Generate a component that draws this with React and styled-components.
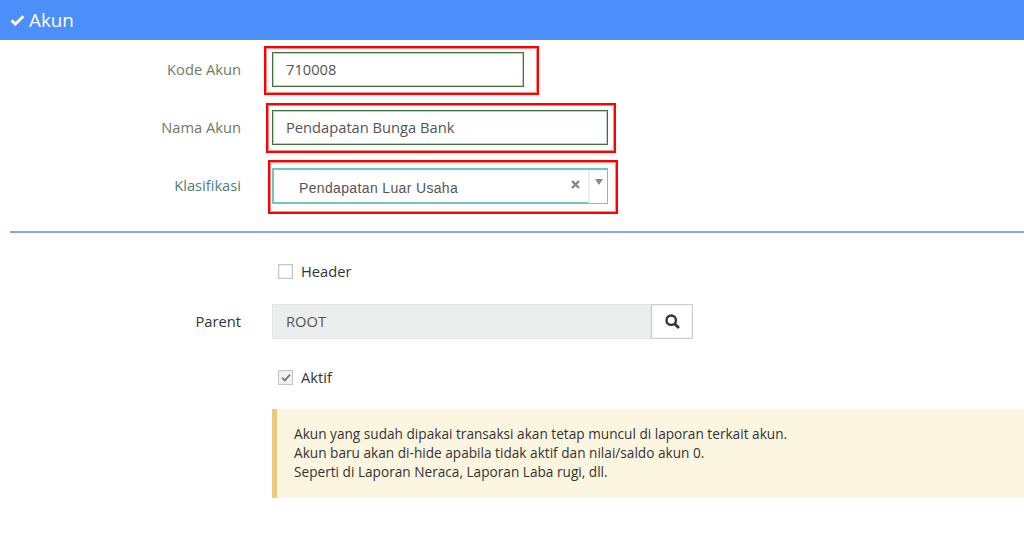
import React from "react";
import styled, { createGlobalStyle } from "styled-components";

const Global = createGlobalStyle`
  html, body { margin: 0; padding: 0; background: #fff; }
  body { font-family: "Open Sans", "Liberation Sans", sans-serif; font-size: 14.7px; color: #333; }
`;

const Page = styled.div`
  width: 1024px;
  height: 548px;
  overflow: hidden;
`;

const TitleBar = styled.div`
  height: 40px;
  background: #4c8ffb;
  color: #fff;
  display: flex;
  align-items: center;
  gap: 4px;
  padding-left: 10px;
  font-size: 18.8px;
  line-height: 38px;
`;

const Rows = styled.div`
  display: flex;
  flex-direction: column;
`;

const Row = styled.div`
  display: grid;
  grid-template-columns: 241px 1fr;
  column-gap: 31px;
  align-items: center;
  height: ${(p) => p.$h}px;
  margin-top: ${(p) => p.$mt || 0}px;
`;

const Label = styled.div`
  text-align: right;
  font-size: 14.7px;
  padding-bottom: 2px;
  color: ${(p) => p.$color || "#333"};
`;

const Framed = styled.div`
  position: relative;
  width: ${(p) => p.$w}px;
`;

const RedBox = styled.div`
  position: absolute;
  top: ${(p) => p.$t}px;
  bottom: ${(p) => p.$b}px;
  left: ${(p) => p.$l}px;
  right: ${(p) => p.$r}px;
  border: 2px solid #f00;
  box-shadow: inset 0 0 0 1px rgba(255, 0, 0, 0.45);
  pointer-events: none;
`;

const TextInput = styled.div`
  box-sizing: border-box;
  height: 35px;
  border: 1px solid #3c763d;
  box-shadow: inset 0 0 0 1px rgba(60, 118, 61, 0.35);
  padding: 0 13px 2px;
  display: flex;
  align-items: center;
  font-size: 14.7px;
  color: #555;
  background: #fff;
`;

const SelectBox = styled.div`
  box-sizing: border-box;
  height: 36px;
  display: flex;
  background: #fff;
  border-top: 2px solid #76c4c0;
  border-left: 2px solid #76c4c0;
  border-right: 1px solid #76c4c0;
`;

const SelectMain = styled.div`
  flex: 1;
  display: flex;
  justify-content: space-between;
  border-bottom: 2px solid #76c4c0;
  border-right: 2px solid #eee;
  padding: 0 8px 0 25px;
  font-family: "Liberation Sans", Arial, sans-serif;
  font-size: 14px;
  letter-spacing: 0.35px;
  color: #555;
`;

const SelectValue = styled.span`
  line-height: 18px;
  margin-top: 9px;
`;

const ClearMark = styled.svg`
  width: 9px;
  height: 9px;
  margin-top: 10px;
`;

const Caret = styled.div`
  width: 17px;
  border-bottom: 1px solid #76c4c0;
  display: flex;
  justify-content: center;
  padding-top: 9px;
  box-sizing: border-box;
`;

const Divider = styled.hr`
  margin: 27px 0 0 10px;
  height: 2px;
  border: none;
  background: #7eaaf3;
`;

const CheckLine = styled.div`
  display: flex;
  align-items: center;
  gap: 8px;
  padding-left: 6px;
  font-size: 14.7px;
  color: #333;
`;

const Check = styled.span`
  box-sizing: border-box;
  width: 15px;
  height: 15px;
  border: 1px solid #c4c8c4;
  box-shadow: inset 0 0 0 1px #eef0ee;
  background: ${(p) => (p.$checked ? "#f2f2f2" : "#fff")};
  display: flex;
  align-items: center;
  justify-content: center;
`;

const InputGroup = styled.div`
  display: flex;
  width: 421px;
  height: 35px;
`;

const ReadOnly = styled.div`
  flex: 1;
  box-sizing: border-box;
  background: #eceded;
  border: 1px solid #e4e6e4;
  display: flex;
  align-items: center;
  padding: 0 13px 2px;
  color: #555;
`;

const SearchButton = styled.div`
  box-sizing: border-box;
  width: 42px;
  background: #fff;
  border: 1px solid #cdd1cd;
  box-shadow: inset 0 0 0 1px #f1f2f1;
  display: flex;
  align-items: center;
  justify-content: center;
`;

const Note = styled.div`
  box-sizing: border-box;
  height: 89px;
  margin-top: 22px;
  margin-left: 272px;
  background: #fcf6e1;
  border-left: 5px solid #efc87f;
  padding: 16px 17px;
  font-size: 13.65px;
  line-height: 18.9px;
  color: #333;
`;

export default function App() {
  return (
    <Page>
      <Global />
      <TitleBar>
        <svg width="15" height="12" viewBox="0 0 15 12">
          <path d="M1.6 6.4 L5.4 10 L13.4 2.2" fill="none" stroke="#fff" strokeWidth="3" />
        </svg>
        Akun
      </TitleBar>
      <Rows>
        <Row $h={35} $mt={12}>
          <Label $color="#6b7d5f">Kode Akun</Label>
          <Framed $w={252}>
            <TextInput>710008</TextInput>
            <RedBox $t={-6} $b={-8} $l={-8} $r={-15} />
          </Framed>
        </Row>
        <Row $h={35} $mt={23}>
          <Label $color="#6b7d5f">Nama Akun</Label>
          <Framed $w={336}>
            <TextInput>Pendapatan Bunga Bank</TextInput>
            <RedBox $t={-7} $b={-8} $l={-6} $r={-8} />
          </Framed>
        </Row>
        <Row $h={36} $mt={23}>
          <Label $color="#4f7f77">Klasifikasi</Label>
          <Framed $w={336}>
            <SelectBox>
              <SelectMain>
                <SelectValue>Pendapatan Luar Usaha</SelectValue>
                <ClearMark viewBox="0 0 9 9">
                  <path d="M1 1 L8 8 M8 1 L1 8" stroke="#888" strokeWidth="2.4" />
                </ClearMark>
              </SelectMain>
              <Caret>
                <svg width="8" height="6" viewBox="0 0 8 6">
                  <path d="M0 0 H8 L4 6 Z" fill="#888" />
                </svg>
              </Caret>
            </SelectBox>
            <RedBox $t={-8} $b={-10} $l={-4} $r={-10} />
          </Framed>
        </Row>
        <Divider />
        <Row $h={20} $mt={28}>
          <span />
          <CheckLine>
            <Check />
            Header
          </CheckLine>
        </Row>
        <Row $h={35} $mt={23}>
          <Label>Parent</Label>
          <InputGroup>
            <ReadOnly>ROOT</ReadOnly>
            <SearchButton>
              <svg width="15" height="15" viewBox="0 0 14 14">
                <circle cx="5.8" cy="5.8" r="4.4" fill="none" stroke="#333" strokeWidth="2.2" />
                <path d="M9 9 L13 13" stroke="#333" strokeWidth="2.6" />
              </svg>
            </SearchButton>
          </InputGroup>
        </Row>
        <Row $h={20} $mt={28}>
          <span />
          <CheckLine>
            <Check $checked>
              <svg width="10" height="9" viewBox="0 0 10 9">
                <path d="M1 4.6 L3.8 7.4 L9 1.6" fill="none" stroke="#777" strokeWidth="1.7" />
              </svg>
            </Check>
            Aktif
          </CheckLine>
        </Row>
        <Note>
          Akun yang sudah dipakai transaksi akan tetap muncul di laporan terkait akun.
          <br />
          Akun baru akan di-hide apabila tidak aktif dan nilai/saldo akun 0.
          <br />
          Seperti di Laporan Neraca, Laporan Laba rugi, dll.
        </Note>
      </Rows>
    </Page>
  );
}
